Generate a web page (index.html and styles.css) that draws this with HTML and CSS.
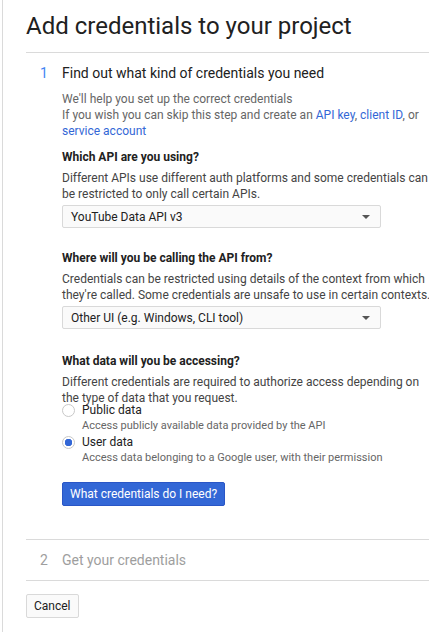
FILE: index.html
```html
<!DOCTYPE html>
<html lang="en">
  <head>
    <meta charset="UTF-8" />
    <title>Add credentials to your project</title>
    <link rel="stylesheet" href="styles.css">
  </head>
  <body>
    <div class="page">
      <h1 class="page-title">Add credentials to your project</h1>

      <section class="step step-active">
        <h2 class="step-head">
          <span class="step-num">1</span>
          <span>Find out what kind of credentials you need</span>
        </h2>

        <div class="step-body">
          <p class="intro">
            We'll help you set up the correct credentials<br>
            If you wish you can skip this step and create an
            <a href="#">API key</a>, <a href="#">client ID</a>, or
            <a href="#">service account</a>
          </p>

          <div class="field">
            <h3 class="field-label">Which API are you using?</h3>
            <p class="field-help">Different APIs use different auth platforms and some credentials can be restricted to only call certain APIs.</p>
            <div class="select">
              <span>YouTube Data API v3</span>
              <span class="caret"></span>
            </div>
          </div>

          <div class="field">
            <h3 class="field-label">Where will you be calling the API from?</h3>
            <p class="field-help">Credentials can be restricted using details of the context from which they're called. Some credentials are unsafe to use in certain contexts.</p>
            <div class="select">
              <span>Other UI (e.g. Windows, CLI tool)</span>
              <span class="caret"></span>
            </div>
          </div>

          <div class="field">
            <h3 class="field-label">What data will you be accessing?</h3>
            <p class="field-help">Different credentials are required to authorize access depending on the type of data that you request.</p>
            <div class="radios">
              <label class="radio">
                <span class="radio-dot"></span>
                <span class="radio-text">
                  <span class="radio-title">Public data</span>
                  <span class="radio-sub">Access publicly available data provided by the API</span>
                </span>
              </label>
              <label class="radio">
                <span class="radio-dot checked"></span>
                <span class="radio-text">
                  <span class="radio-title">User data</span>
                  <span class="radio-sub">Access data belonging to a Google user, with their permission</span>
                </span>
              </label>
            </div>
          </div>

          <button class="btn-primary">What credentials do I need?</button>
        </div>
      </section>

      <section class="step step-off">
        <h2 class="step-head">
          <span class="step-num">2</span>
          <span>Get your credentials</span>
        </h2>
      </section>

      <button class="btn">Cancel</button>
    </div>
  </body>
</html>
```

FILE: styles.css
```css
body {
  margin: 0;
  font-family: Roboto, Arial, sans-serif;
  color: #212121;
  background: #fff;
}

.page {
  border-left: 1px solid #dadada;
  margin-left: 2px;
  padding: 12px 0 0 23px;
  min-height: 632px;
  box-sizing: border-box;
}

.page-title {
  margin: 0;
  font-size: 24px;
  font-weight: 400;
  line-height: 28px;
  padding-bottom: 12px;
  border-bottom: 1px solid #dadada;
}

.step-head {
  display: flex;
  margin: 0;
  font-size: 14px;
  font-weight: 400;
  line-height: 20px;
  padding: 10px 0 0 14px;
}

.step-num {
  width: 22px;
  color: #4285f4;
}

.step-body {
  padding: 8px 0 33px 36px;
}

.intro {
  margin: 0;
  font-size: 12px;
  line-height: 16px;
  color: #666;
}

a {
  color: #3367d6;
  text-decoration: none;
}

.field {
  margin-top: 10px;
}

.field + .field {
  margin-top: 22px;
}

.field:last-child,
.field + .field + .field {
  margin-top: 24px;
}

.field-label {
  margin: 0;
  font-size: 12px;
  font-weight: 700;
  line-height: 16px;
}

.field-help {
  margin: 5px -5px 0 0;
  font-size: 12px;
  line-height: 16px;
  color: #444;
}

.select {
  display: flex;
  justify-content: space-between;
  align-items: center;
  width: 319px;
  height: 23px;
  margin-top: 3px;
  padding: 0 8px;
  box-sizing: border-box;
  border: 1px solid #d9d9d9;
  border-radius: 2px;
  background: #fafafa;
  font-size: 12px;
}

.caret {
  width: 0;
  height: 0;
  margin-right: 2px;
  border-left: 4px solid transparent;
  border-right: 4px solid transparent;
  border-top: 4px solid #555;
}

.radios {
  margin-top: -4px;
}

.radio {
  display: flex;
  gap: 7px;
}

.radio-dot {
  width: 13px;
  height: 13px;
  margin-top: 2px;
  border: 1px solid #c8c8c8;
  border-radius: 50%;
  background: #fff;
  box-sizing: border-box;
  flex: none;
}

.radio-dot.checked {
  background: radial-gradient(circle, #3367d6 0 3.5px, #fff 4px);
}

.radio-text {
  display: flex;
  flex-direction: column;
}

.radio-title {
  font-size: 12px;
  line-height: 16px;
}

.radio-sub {
  font-size: 11px;
  line-height: 16px;
  color: #666;
}

.btn-primary {
  display: block;
  margin-top: 16px;
  height: 24px;
  padding: 0 7px;
  border: 1px solid #2a56c6;
  border-radius: 2px;
  background: #3367d6;
  color: #fff;
  font-family: inherit;
  font-size: 12px;
}

.step-off {
  border-top: 1px solid #dadada;
  border-bottom: 1px solid #dadada;
  padding-bottom: 10px;
  color: #9e9e9e;
}

.step-off .step-head {
  padding-top: 10px;
}

.step-off .step-num {
  color: #9e9e9e;
}

.btn {
  display: block;
  margin-top: 13px;
  height: 24px;
  padding: 0 7px;
  border: 1px solid #d9d9d9;
  border-radius: 2px;
  background: #fafafa;
  color: #212121;
  font-family: inherit;
  font-size: 12px;
}
```
